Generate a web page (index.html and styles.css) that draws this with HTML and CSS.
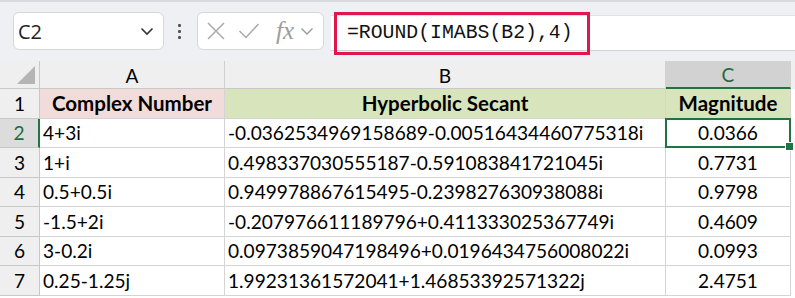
FILE: index.html
```html
<!DOCTYPE html>
<html>
<head>
<meta charset="utf-8">
<link rel="stylesheet" href="styles.css">
</head>
<body>
<div class="toolbar">
  <div class="namebox">
    <span class="cellref">C2</span>
    <svg class="chev" width="14" height="9" viewBox="0 0 14 9"><path d="M1.5 1.5 L7 7 L12.5 1.5" fill="none" stroke="#333" stroke-width="1.6"/></svg>
  </div>
  <div class="dots"><i></i><i></i><i></i></div>
  <div class="fxbox">
    <svg width="20" height="20" viewBox="0 0 20 20"><path d="M2 2 L18 18 M18 2 L2 18" stroke="#a9a9a9" stroke-width="1.5" fill="none"/></svg>
    <svg width="22" height="18" viewBox="0 0 22 18"><path d="M1.5 9 L8 15.5 L20.5 2" stroke="#a9a9a9" stroke-width="1.5" fill="none"/></svg>
    <span class="fx">fx</span>
    <svg width="14" height="9" viewBox="0 0 14 9"><path d="M1.5 1.5 L7 7 L12.5 1.5" fill="none" stroke="#999" stroke-width="1.4"/></svg>
  </div>
  <div class="formulabar">
    <span class="formula">=ROUND(IMABS(B2),4)</span>
    <div class="redbox"></div>
  </div>
</div>
<div class="grid">
  <div class="corner"><span class="tri"></span></div>
  <div class="colh">A</div>
  <div class="colh">B</div>
  <div class="colh sel">C</div>
  <div class="filler"></div>

  <div class="rowh">1</div>
  <div class="cell hd pink">Complex Number</div>
  <div class="cell hd green">Hyperbolic Secant</div>
  <div class="cell hd green">Magnitude</div>
  <div class="filler"></div>

  <div class="rowh selrow">2</div>
  <div class="cell">4+3i</div>
  <div class="cell">-0.0362534969158689-0.00516434460775318i</div>
  <div class="cell num active">0.0366<span class="handle"></span></div>
  <div class="filler"></div>

  <div class="rowh">3</div>
  <div class="cell">1+i</div>
  <div class="cell">0.498337030555187-0.591083841721045i</div>
  <div class="cell num">0.7731</div>
  <div class="filler"></div>

  <div class="rowh">4</div>
  <div class="cell">0.5+0.5i</div>
  <div class="cell">0.949978867615495-0.239827630938088i</div>
  <div class="cell num">0.9798</div>
  <div class="filler"></div>

  <div class="rowh">5</div>
  <div class="cell">-1.5+2i</div>
  <div class="cell">-0.207976611189796+0.411333025367749i</div>
  <div class="cell num">0.4609</div>
  <div class="filler"></div>

  <div class="rowh">6</div>
  <div class="cell">3-0.2i</div>
  <div class="cell">0.0973859047198496+0.0196434756008022i</div>
  <div class="cell num">0.0993</div>
  <div class="filler"></div>

  <div class="rowh">7</div>
  <div class="cell">0.25-1.25j</div>
  <div class="cell">1.99231361572041+1.46853392571322j</div>
  <div class="cell num">2.4751</div>
  <div class="filler"></div>
</div>
</body>
</html>
```

FILE: styles.css
```css
html, body {
  margin: 0;
  padding: 0;
  background: #ffffff;
  overflow: hidden;
}
body {
  width: 795px;
  height: 298px;
  font-family: Lato, "Liberation Sans", sans-serif;
}
.toolbar {
  height: 61px;
  box-sizing: border-box;
  background: #eef0f3;
  border-top: 2px solid #d8dadd;
  display: flex;
  align-items: flex-start;
  padding-top: 10px;
}
.namebox {
  margin-left: 13px;
  width: 151px;
  height: 38px;
  box-sizing: border-box;
  background: #fff;
  border: 1px solid #d5d7da;
  border-radius: 6px;
  display: flex;
  align-items: center;
  justify-content: space-between;
  padding: 0 9px 0 4px;
}
.cellref {
  font-family: "Open Sans", "Liberation Sans", sans-serif;
  font-size: 20px;
  color: #222;
}
.dots {
  margin-left: 14px;
  width: 5px;
  height: 38px;
  display: flex;
  flex-direction: column;
  justify-content: center;
  gap: 3px;
}
.dots i {
  display: block;
  width: 3px;
  height: 3px;
  background: #555;
  border-radius: 1px;
}
.fxbox {
  margin-left: 14px;
  width: 127px;
  height: 38px;
  box-sizing: border-box;
  background: #fff;
  border: 1px solid #d5d7da;
  border-radius: 6px;
  display: flex;
  align-items: center;
  padding: 0 5px 0 8px;
  gap: 12px;
}
.fx {
  font-family: "Liberation Serif", serif;
  font-style: italic;
  font-size: 25px;
  color: #9c9c9c;
  margin-left: 4px;
  margin-right: -6px;
}
.formulabar {
  position: relative;
  margin-left: 7px;
  margin-top: 3px;
  flex: 1;
  height: 36px;
  box-sizing: border-box;
  background: #fff;
  border-top: 1px solid #dfe1e4;
  border-bottom: 1px solid #d0d2d5;
  display: flex;
  align-items: center;
  padding-left: 16px;
}
.formula {
  font-family: "Liberation Mono", monospace;
  font-size: 19.8px;
  color: #111;
}
.redbox {
  position: absolute;
  left: 3px;
  top: -4px;
  width: 256px;
  height: 43px;
  box-sizing: border-box;
  border: 3px solid #e0174a;
}
.grid {
  display: grid;
  grid-template-columns: 40px 185px 441px 125px 1fr;
  grid-template-rows: 28px repeat(7, 29.5px);
  font-size: 19.1px;
  color: #000;
}
.corner {
  position: relative;
  background: #efefef;
  border-right: 1px solid #c8c8c8;
  border-bottom: 1px solid #c8c8c8;
  box-sizing: border-box;
}
.tri {
  position: absolute;
  right: 4px;
  bottom: 4px;
  width: 0;
  height: 0;
  border-left: 18px solid transparent;
  border-bottom: 18px solid #b4b4b4;
}
.colh {
  background: #efefef;
  border-right: 1px solid #d0d0d0;
  border-bottom: 1px solid #c8c8c8;
  box-sizing: border-box;
  display: flex;
  align-items: center;
  justify-content: center;
  padding-top: 1px;
}
.colh.sel {
  background: #d2d2d2;
  color: #1e6b41;
  border-bottom: 2px solid #217346;
}
.filler {
  background: #fff;
}
.grid > .filler:nth-child(5) {
  background: #efefef;
}
.rowh {
  background: #efefef;
  border-right: 1px solid #c8c8c8;
  border-bottom: 1px solid #c8c8c8;
  box-sizing: border-box;
  display: flex;
  align-items: center;
  justify-content: center;
}
.rowh.selrow {
  background: #dcdcdc;
  color: #1e6b41;
  border-right: 2px solid #217346;
}
.cell {
  border-right: 1px solid #d4d4d4;
  border-bottom: 1px solid #d4d4d4;
  box-sizing: border-box;
  display: flex;
  align-items: center;
  padding-left: 3px;
  white-space: nowrap;
  overflow: hidden;
}
.cell.hd {
  font-size: 20.5px;
  font-weight: 700;
  justify-content: center;
  padding-left: 0;
}
.pink { background: #f2dcdb; }
.green { background: #d8e4bc; }
.cell.num {
  justify-content: center;
  padding-left: 0;
}
.cell.active {
  position: relative;
  overflow: visible;
  border: 2px solid #217346;
  margin: -1px 0 0 -1px;
}
.handle {
  position: absolute;
  right: -5px;
  bottom: -5px;
  width: 7px;
  height: 7px;
  background: #217346;
  border: 1px solid #fff;
}
```
